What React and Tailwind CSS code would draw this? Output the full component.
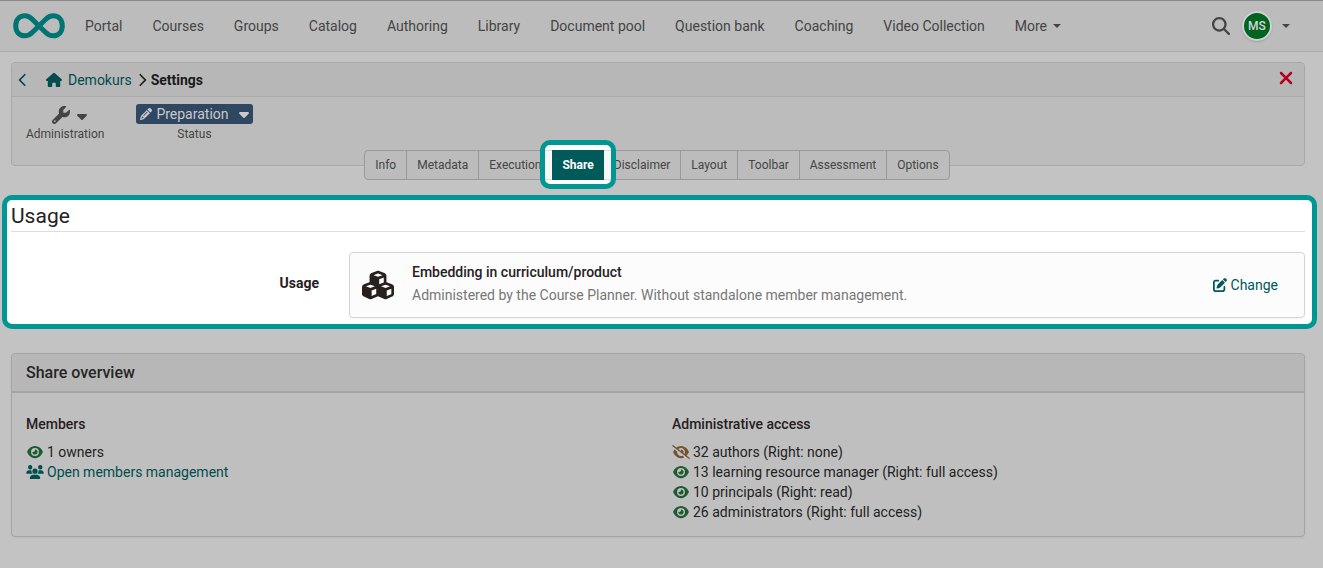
import {
  FaCaretDown,
  FaChevronLeft,
  FaChevronRight,
  FaCubes,
  FaEye,
  FaEyeSlash,
  FaHouse,
  FaMagnifyingGlass,
  FaPencil,
  FaPenToSquare,
  FaUsers,
  FaWrench,
  FaXmark,
} from "react-icons/fa6";

const navItems = [
  "Portal",
  "Courses",
  "Groups",
  "Catalog",
  "Authoring",
  "Library",
  "Document pool",
  "Question bank",
  "Coaching",
  "Video Collection",
];

const tabs = [
  "Info",
  "Metadata",
  "Execution",
  "Share",
  "Disclaimer",
  "Layout",
  "Toolbar",
  "Assessment",
  "Options",
];

const accessRights = [
  { text: "32 authors (Right: none)", visible: false },
  { text: "13 learning resource manager (Right: full access)", visible: true },
  { text: "10 principals (Right: read)", visible: true },
  { text: "26 administrators (Right: full access)", visible: true },
];

function Caret() {
  return (
    <span className="inline-block border-x-4 border-t-4 border-x-transparent border-t-[#444444]" />
  );
}

function Logo() {
  return (
    <svg viewBox="0 0 52 26" className="h-[26px] w-[52px]" fill="none" aria-hidden="true">
      <path
        d="M26 13L19.500 6.500C16.800 3.800 14.800 2.800 11.800 2.800C6.200 2.800 2.700 7 2.700 12.800S6.200 22.800 11.800 22.800C14.800 22.800 16.800 21.800 19.500 19.200L32.500 6.500C35.200 3.800 37.200 2.800 40.200 2.800C45.800 2.800 49.300 7 49.300 12.800S45.800 22.800 40.200 22.800C37.200 22.800 35.200 21.800 32.500 19.200Z"
        stroke="#007373"
        strokeWidth="5"
      />
    </svg>
  );
}

function NavBar() {
  return (
    <header className="flex h-[52px] items-center border-t border-b border-t-[#888888] border-b-[#a9a9a9] bg-[#bcbcbc] pr-[33px] pl-[13px]">
      <a href="#home" aria-label="Home" className="mr-[5px]">
        <Logo />
      </a>
      <nav className="flex text-[#444444]">
        {navItems.map((item) => (
          <a key={item} href="#nav" className="px-[15px] whitespace-nowrap">
            {item}
          </a>
        ))}
        <button type="button" className="flex items-center gap-1.5 px-[15px]">
          More
          <Caret />
        </button>
      </nav>
      <div className="ml-auto flex items-center gap-3">
        <button type="button" aria-label="Search" className="text-lg text-[#444444]">
          <FaMagnifyingGlass />
        </button>
        <button type="button" aria-label="User menu" className="flex items-center gap-2.5">
          <span className="flex size-[30px] items-center justify-center rounded-full border-2 border-[#d0d0d0] bg-[#006421] text-xs font-medium text-[#d4d4d4] shadow-sm">
            MS
          </span>
          <Caret />
        </button>
      </div>
    </header>
  );
}

function Toolbar() {
  return (
    <section className="h-[104px] rounded border border-[#a9a9a9] bg-[#bcbcbc]">
      <div className="flex h-[34px] items-center rounded-t border-b border-[#a9a9a9] bg-[#b7b7b7] pr-2 pl-1 text-[#004d4d]">
        <a href="#back" aria-label="Back" className="mr-4">
          <FaChevronLeft />
        </a>
        <a href="#course" className="flex items-center gap-1.5">
          <FaHouse className="text-base" />
          Demokurs
        </a>
        <FaChevronRight className="mr-0.5 ml-[3px] text-[#222222]" />
        <span className="font-bold text-[#1a1a1a]">Settings</span>
        <button type="button" aria-label="Close" className="ml-auto pb-1 text-xl text-[#b5001f]">
          <FaXmark />
        </button>
      </div>
      <div className="flex gap-8 px-3.5 pt-[7px] text-xs text-[#444444]">
        <button type="button" className="flex flex-col items-center">
          <span className="flex h-5 items-end gap-1 pl-3">
            <FaWrench className="text-lg" />
            <FaCaretDown className="text-base" />
          </span>
          <span className="leading-5">Administration</span>
        </button>
        <button type="button" className="flex flex-col items-center">
          <span className="flex h-5 items-center rounded-[3px] bg-[#2f4761] pr-px pl-1 text-sm text-[#c9c9c9]">
            <FaPencil className="mr-1 text-xs" />
            Preparation
            <FaCaretDown className="ml-[7px] text-base" />
          </span>
          <span className="leading-5">Status</span>
        </button>
      </div>
    </section>
  );
}

function Tabs() {
  return (
    <nav className="-mt-4 flex justify-center pr-px text-xs">
      {tabs.map((tab) =>
        tab === "Share" ? (
          <a
            key={tab}
            href="#share"
            aria-current="page"
            className="relative z-10 flex h-[30px] items-center bg-[#005a5a] px-2.5 font-bold text-white"
          >
            {tab}
            <span className="absolute -inset-x-[7px] -top-[5px] h-[5px] bg-white" />
            <span className="absolute -inset-x-[7px] -bottom-1 h-1 bg-white" />
            <span className="absolute inset-y-0 -left-[7px] w-[7px] border-y border-[#dddddd] bg-[#f8f8f8]" />
            <span className="absolute inset-y-0 -right-[7px] w-[7px] border-y border-[#dddddd] bg-[#f8f8f8]" />
            <span className="absolute -inset-x-3 -top-2.5 -bottom-[9px] rounded-[10px] border-[5px] border-[#009694]" />
          </a>
        ) : (
          <a
            key={tab}
            href="#tab"
            className="-ml-px flex h-[30px] items-center border border-[#999999] bg-[#bcbcbc] px-2.5 text-[#444444] first:rounded-l last:rounded-r"
          >
            {tab}
          </a>
        ),
      )}
    </nav>
  );
}

function Usage() {
  return (
    <section className="mt-[15px] -mr-3 -ml-[9px] rounded-[10px] border-[5px] border-[#009694] bg-white pr-[7px] pb-[6px] pl-1 text-[#26211e]">
      <h2 className="border-b border-[#dddddd] pt-[3px] pb-0.5 text-[21px] leading-[26px]">Usage</h2>
      <div className="mt-5 grid grid-cols-[308px_1fr] gap-[30px]">
        <div className="pt-[21px] text-right font-bold">Usage</div>
        <div className="flex h-[66px] items-center rounded border border-[#d5d5d5] bg-[#fcfcfc] pr-[26px] pl-3 shadow-xs">
          <FaCubes className="mr-[18px] text-[32px]" />
          <div className="pb-1">
            <h3 className="mb-[3px] font-medium">Embedding in curriculum/product</h3>
            <p className="text-[#777777]">
              Administered by the Course Planner. Without standalone member management.
            </p>
          </div>
          <button type="button" className="ml-auto flex items-center gap-1 text-[#005a5a]">
            <FaPenToSquare />
            Change
          </button>
        </div>
      </div>
    </section>
  );
}

function ShareOverview() {
  return (
    <section className="mt-6 h-[184px] rounded border border-[#a4a4a4] bg-[#bfbfbf] shadow-xs">
      <h2 className="flex h-[39px] items-center rounded-t border-b-2 border-[#a4a4a4] bg-[#b7b7b7] px-3.5 text-base font-medium text-[#262626]">
        Share overview
      </h2>
      <div className="grid grid-cols-2 gap-7 px-3.5 pt-[21px]">
        <div>
          <h3 className="mb-2 font-medium text-[#26211e]">Members</h3>
          <p className="flex items-center gap-[3px]">
            <FaEye className="w-[18px] text-[#1c5a2f]" />1 owners
          </p>
          <a href="#members" className="flex items-center gap-[3px] text-[#004d4d]">
            <FaUsers className="w-[18px]" />
            Open members management
          </a>
        </div>
        <div>
          <h3 className="mb-2 font-medium text-[#26211e]">Administrative access</h3>
          <ul>
            {accessRights.map(({ text, visible }) => (
              <li key={text} className="flex items-center gap-[3px]">
                {visible ? (
                  <FaEye className="w-[18px] text-[#1c5a2f]" />
                ) : (
                  <FaEyeSlash className="w-[18px] text-[#755331]" />
                )}
                {text}
              </li>
            ))}
          </ul>
        </div>
      </div>
    </section>
  );
}

export default function App() {
  return (
    <div className="min-h-screen bg-[#c3c3c3] font-[Roboto,sans-serif] text-sm text-[#222222]">
      <NavBar />
      <main className="mr-[18px] ml-[11px] pt-2.5">
        <Toolbar />
        <Tabs />
        <Usage />
        <ShareOverview />
      </main>
    </div>
  );
}
